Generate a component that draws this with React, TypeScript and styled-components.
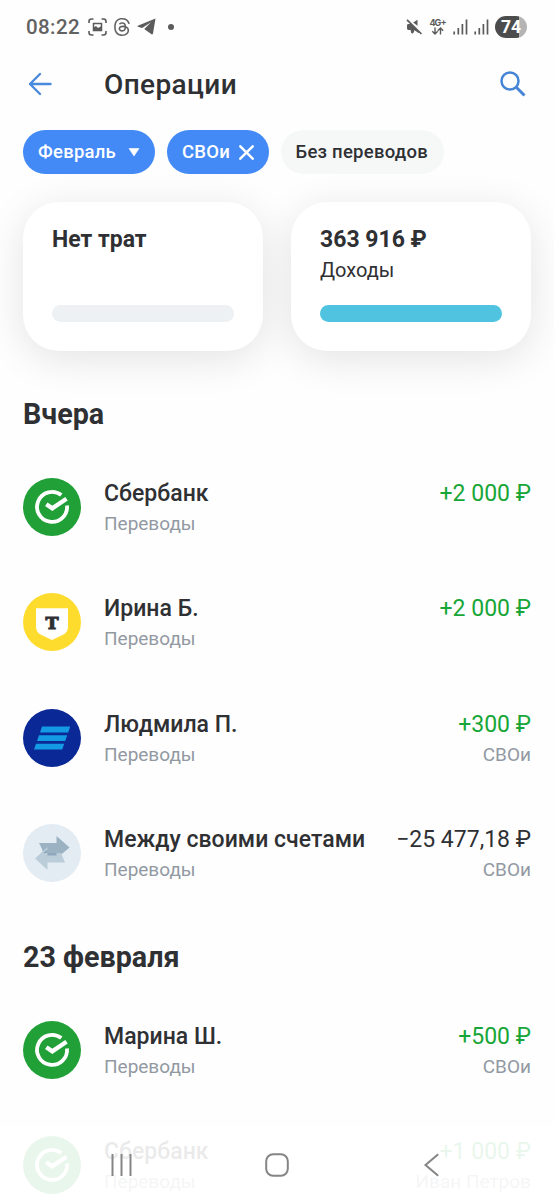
import React from "react";
import styled, { createGlobalStyle } from "styled-components";
import { BsThreads } from "react-icons/bs";

const GlobalStyle = createGlobalStyle`
  * { box-sizing: border-box; }
  body { margin: 0; background: #fff; font-family: Roboto, "Liberation Sans", sans-serif; color: #2f3033; }
  svg { display: block; flex: none; }
`;

const Screen = styled.main`
  position: relative;
  width: 554px;
  height: 1200px;
  overflow: hidden;
  background: #fefefe;
`;

const StatusBar = styled.div`
  display: flex;
  align-items: center;
  height: 53px;
  padding: 0 27px 0 26px;
  color: #626262;
`;

const Clock = styled.span`
  width: 62px;
  font-size: 20.5px;
  font-weight: 500;
  letter-spacing: 0.4px;
`;

const StatusIcons = styled.div`
  display: flex;
  align-items: center;
  gap: 6px;
`;

const Dot = styled.i`
  width: 6px;
  height: 6px;
  margin-left: 6px;
  border-radius: 50%;
  background: #5b5b5b;
`;

const SystemIcons = styled(StatusIcons)`
  margin-left: auto;
`;

const Battery = styled.span`
  width: 32px;
  height: 22px;
  border-radius: 11px;
  background: linear-gradient(90deg, #4c4c4c 74%, #b4b4b4 74%);
  color: #fff;
  font: 700 17.5px/22px Roboto, sans-serif;
  text-align: center;
`;

const TitleBar = styled.header`
  display: flex;
  align-items: center;
  height: 62px;
  padding: 0 28px;
`;

const Title = styled.h1`
  flex: 1;
  margin: 1px 0 0 52px;
  font-size: 28px;
  line-height: 34px;
  font-weight: 500;
  letter-spacing: 0.4px;
`;

const Chips = styled.div`
  display: flex;
  gap: 12px;
  padding: 15px 23px 0;
`;

const Chip = styled.button<{ $width: number; $active?: boolean }>`
  display: flex;
  align-items: center;
  justify-content: space-between;
  width: ${(p) => p.$width}px;
  height: 44px;
  padding: 0 15px;
  border: 0;
  border-radius: 22px;
  background: ${(p) => (p.$active ? "#438af7" : "#f6f8f8")};
  color: ${(p) => (p.$active ? "#fff" : "#2f3033")};
  font: 500 18.5px/24px Roboto, sans-serif;
  letter-spacing: 0.25px;
  white-space: nowrap;
`;

const Cards = styled.section`
  display: flex;
  gap: 28px;
  padding: 28px 23px 0;
`;

const Card = styled.article`
  display: flex;
  flex-direction: column;
  width: 240px;
  height: 149px;
  padding: 23px 29px 29px;
  border-radius: 36px;
  background: #fff;
  box-shadow: 0 8px 40px rgba(0, 0, 0, 0.11);
`;

const CardValue = styled.strong`
  font-size: 23px;
  line-height: 30px;
  font-weight: 700;
`;

const CardCaption = styled.span`
  font-size: 20px;
  line-height: 31px;
`;

const Meter = styled.div<{ $color: string }>`
  height: 17px;
  margin-top: auto;
  border-radius: 9px;
  background: ${(p) => p.$color};
`;

const Day = styled.section<{ $top: number }>`
  padding: ${(p) => p.$top}px 23px 0;
`;

const DayTitle = styled.h2`
  margin: 0;
  padding-bottom: 46px;
  font-size: 28.7px;
  line-height: 35px;
  font-weight: 700;
`;

const Operation = styled.div`
  display: flex;
  height: 115.4px;
`;

const Avatar = styled.div<{ $color: string }>`
  display: grid;
  place-items: center;
  width: 58px;
  height: 58px;
  margin-right: 23px;
  border-radius: 50%;
  background: ${(p) => p.$color};
`;

const Column = styled.div<{ $end?: boolean }>`
  display: flex;
  flex-direction: column;
  align-items: ${(p) => (p.$end ? "flex-end" : "flex-start")};
  margin-left: ${(p) => (p.$end ? "auto" : "0")};
  padding-top: 1px;
  white-space: nowrap;
`;

const Name = styled.span`
  font-size: 23px;
  line-height: 30px;
  font-weight: 500;
  letter-spacing: 0.02px;
`;

const Amount = styled.span<{ $income?: boolean }>`
  font-size: 23px;
  line-height: 30px;
  color: ${(p) => (p.$income ? "#17a637" : "#2f3033")};
`;

const Note = styled.span`
  font-size: 19px;
  line-height: 30px;
  color: #9299a2;
`;

const NavBar = styled.nav`
  position: absolute;
  inset: auto 0 0;
  display: flex;
  align-items: center;
  justify-content: space-between;
  height: 74px;
  padding: 3px 115px 0 110px;
  background: rgba(255, 255, 255, 0.9);
`;

const ShieldLetter = styled.text`
  font: 700 17.5px "DejaVu Serif", serif;
  fill: #2f3033;
  stroke: #2f3033;
  stroke-width: 1.1px;
`;

const NetworkLabel = styled.text`
  font: 700 9px Inter, sans-serif;
  fill: #5b5b5b;
`;

const Signal = () => (
  <svg width="15" height="16" viewBox="0 0 15 16" stroke="#5b5b5b" strokeWidth="1.7">
    <path d="M1.2 15.5V12.5M5.3 15.5V9M9.4 15.5V5M13.5 15.5V0.5" />
  </svg>
);

type BankKind = "sber" | "tbank" | "vtb" | "own";

const bankColors: Record<BankKind, string> = {
  sber: "#21a038",
  tbank: "#fddc2e",
  vtb: "#0a2896",
  own: "#e3ebf3",
};

const BankLogo = ({ kind }: { kind: BankKind }) => (
  <Avatar $color={bankColors[kind]}>
    <svg width="58" height="58" viewBox="0 0 58 58">
      {kind === "sber" && (
        <g fill="none" stroke="#fff">
          <path d="M38.3 17.1A15 15 0 1 0 44 27.5" strokeWidth="3.8" />
          <path d="M23.3 26.2L29.3 30.3L43.5 20.7" strokeWidth="4.4" />
        </g>
      )}
      {kind === "tbank" && (
        <>
          <path d="M13 15.2h32v18.5q0 5.5-5 8L29 47l-11-5.3q-5-2.5-5-8z" fill="#fff" />
          <ShieldLetter x="29" y="36" textAnchor="middle">T</ShieldLetter>
        </>
      )}
      {kind === "vtb" && (
        <path
          d="M19 17.5H47.2L45.2 23.5H17zM16 26.2H44.2L42.2 32H14zM13 34.8H41.2L39.2 40.6H11z"
          fill="#1499e5"
        />
      )}
      {kind === "own" && (
        <>
          <path d="M16 19H33.5V12L46.5 23.5L33.5 34.5V29H20L19 25z" fill="#9bb2c3" />
          <path d="M12 34.5L24.5 23V29H38L42 38.5H24.5V46z" fill="#bccdda" />
          <path d="M24.5 25.5V29H33.5V31.5H24.5V29H20z" fill="#8ea8bb" />
        </>
      )}
    </svg>
  </Avatar>
);

interface Item {
  kind: BankKind;
  name: string;
  amount: string;
  account?: string;
  expense?: boolean;
}

const yesterday: Item[] = [
  { kind: "sber", name: "Сбербанк", amount: "+2 000 ₽" },
  { kind: "tbank", name: "Ирина Б.", amount: "+2 000 ₽" },
  { kind: "vtb", name: "Людмила П.", amount: "+300 ₽", account: "СВОи" },
  { kind: "own", name: "Между своими счетами", amount: "−25 477,18 ₽", account: "СВОи", expense: true },
];

const february23: Item[] = [
  { kind: "sber", name: "Марина Ш.", amount: "+500 ₽", account: "СВОи" },
  { kind: "sber", name: "Сбербанк", amount: "+1 000 ₽", account: "Иван Петров" },
];

const OperationList = ({ items }: { items: Item[] }) => (
  <>
    {items.map((item, i) => (
      <Operation key={i}>
        <BankLogo kind={item.kind} />
        <Column>
          <Name>{item.name}</Name>
          <Note>Переводы</Note>
        </Column>
        <Column $end>
          <Amount $income={!item.expense}>{item.amount}</Amount>
          {item.account && <Note>{item.account}</Note>}
        </Column>
      </Operation>
    ))}
  </>
);

export default function App() {
  return (
    <Screen>
      <GlobalStyle />
      <StatusBar>
        <Clock>08:22</Clock>
        <StatusIcons>
          <svg width="19" height="18" viewBox="0 0 19 18" fill="none" stroke="#5b5b5b" strokeWidth="1.6">
            <path d="M1 5V3.5Q1 1 3.5 1H5.5M13.5 1H15.5Q18 1 18 3.5V5M18 13V14.5Q18 17 15.5 17H13.5M5.5 17H3.5Q1 17 1 14.5V13" />
            <path d="M5.5 5.5H13.5V12.5H5.5z" strokeWidth="1.5" />
            <path d="M5.5 12.5V9.5L8 8L10 10L13.5 8V12.5z" fill="#5b5b5b" stroke="none" />
          </svg>
          <BsThreads size={18} />
          <svg width="19" height="17" viewBox="0 0 19 17" fill="#5b5b5b">
            <path d="M18.5 0.5L0.8 7.8Q0 8.4 1 8.8L5.1 10L14 4.2L7.5 10.8V11.3L14.6 16.2Q15.6 16.8 16 15.6z" />
          </svg>
          <Dot />
        </StatusIcons>
        <SystemIcons>
          <svg width="17" height="16" viewBox="0 0 17 16" fill="#5b5b5b">
            <path d="M7.2 3.6L11.5 0.8V6.8z" />
            <path d="M1 6.4Q1 5 2.4 5H5.2L13.5 13.2L12.5 14L8.5 11.2L7.5 13.8Q6.5 15 5.2 14L4.6 11H2.4Q1 11 1 9.6z" />
            <path d="M1 0.8L15.5 15" stroke="#5b5b5b" strokeWidth="1.7" />
          </svg>
          <svg width="18" height="18" viewBox="0 0 18 18">
            <NetworkLabel x="0.5" y="7.5" textLength="17">4G+</NetworkLabel>
            <path d="M6 9.5V16M3.3 13.3L6 16L8.7 13.3M11.5 16.5V10M8.8 12.7L11.5 10L14.2 12.7" fill="none" stroke="#5b5b5b" strokeWidth="1.4" />
          </svg>
          <Signal />
          <Signal />
          <Battery>74</Battery>
        </SystemIcons>
      </StatusBar>

      <TitleBar>
        <svg width="24" height="24" viewBox="0 0 24 24" fill="none" stroke="#4a8ade" strokeWidth="2.4" strokeLinecap="round" strokeLinejoin="round">
          <path d="M22.5 12H2M12 2L2 12L12 22" />
        </svg>
        <Title>Операции</Title>
        <svg width="27" height="27" viewBox="0 0 27 27" fill="none" stroke="#4685d6">
          <circle cx="11" cy="10" r="8.5" strokeWidth="2.5" />
          <path d="M17 16L25.5 24.5" strokeWidth="3" />
        </svg>
      </TitleBar>

      <Chips>
        <Chip $width={132} $active>
          Февраль
          <svg width="12" height="8" viewBox="0 0 12 8"><path d="M1 0.5H11L6 8z" fill="#fff" stroke="#fff" strokeWidth="0.6" strokeLinejoin="round" /></svg>
        </Chip>
        <Chip $width={101.5} $active>
          СВОи
          <svg width="15" height="15" viewBox="0 0 14 14" stroke="#fff" strokeWidth="2.3" strokeLinecap="round"><path d="M1.2 1.2L12.8 12.8M12.8 1.2L1.2 12.8" /></svg>
        </Chip>
        <Chip $width={163}>Без переводов</Chip>
      </Chips>

      <Cards>
        <Card>
          <CardValue>Нет трат</CardValue>
          <Meter $color="#eef1f4" />
        </Card>
        <Card>
          <CardValue>363 916 ₽</CardValue>
          <CardCaption>Доходы</CardCaption>
          <Meter $color="#4fc3df" />
        </Card>
      </Cards>

      <Day $top={46}>
        <DayTitle>Вчера</DayTitle>
        <OperationList items={yesterday} />
      </Day>
      <Day $top={0}>
        <DayTitle>23 февраля</DayTitle>
        <OperationList items={february23} />
      </Day>

      <NavBar>
        <svg width="23" height="24" viewBox="0 0 23 24" stroke="#858585" strokeWidth="2"><path d="M2.5 1V23M11.5 1V23M20.5 1V23" /></svg>
        <svg width="27" height="24" viewBox="0 0 27 24" fill="none" stroke="#858585" strokeWidth="2"><rect x="1.2" y="1.2" width="21.6" height="21.6" rx="7" /></svg>
        <svg width="16" height="24" viewBox="0 0 16 24" fill="none" stroke="#858585" strokeWidth="2"><path d="M15.2 1.2L2.5 12L15.2 22.8" /></svg>
      </NavBar>
    </Screen>
  );
}
